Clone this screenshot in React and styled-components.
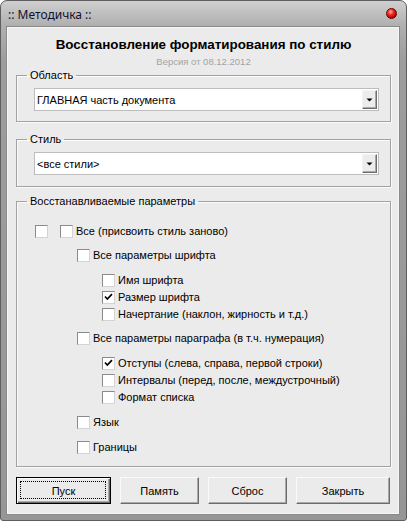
import React, { useState } from "react";
import styled, { createGlobalStyle } from "styled-components";

const GlobalStyle = createGlobalStyle`
  body {
    margin: 0;
    background: #ffffff;
    font-family: "Liberation Sans", Arial, sans-serif;
  }
`;

const Window = styled.div`
  width: 407px;
  height: 521px;
  box-sizing: border-box;
  display: flex;
  flex-direction: column;
  padding: 0 7px 6px 6px;
  border: 1px solid #5e5e5e;
  border-radius: 7px 7px 3px 3px;
  background: linear-gradient(180deg, #cfcfcf 0px, #b0b0b0 24px, #9d9d9d 60px, #969696 100%);
`;

const TitleBar = styled.div`
  height: 26px;
  display: flex;
  align-items: center;
  justify-content: space-between;
  padding: 0 2px 0 1px;
`;

const Caption = styled.span`
  font-family: "Noto Sans", "Open Sans", sans-serif;
  font-size: 12px;
  color: #101030;
  padding-top: 1px;
`;

const CloseDot = styled.div`
  width: 11px;
  height: 11px;
  box-sizing: border-box;
  border-radius: 50%;
  border: 1px solid #6a0000;
  background: radial-gradient(circle at 40% 32%, #ffb0a8 0, #f03020 35%, #c00000 70%, #7a0000 100%);
  margin-bottom: 1px;
`;

const Client = styled.div`
  flex: 1;
  display: flex;
  flex-direction: column;
  background: #ebebeb;
  border: 1px solid #f7f7f7;
  box-shadow: 0 0 0 1px #8a8a8a;
  padding: 0 7px 9px 8px;
  font-size: 11px;
  color: #000;
`;

const Heading = styled.div`
  padding-top: 9px;
  text-align: center;
  font-weight: bold;
  font-size: 13.4px;
  line-height: 16px;
`;

const Version = styled.div`
  margin-top: 3px;
  text-align: center;
  font-size: 9.5px;
  line-height: 12px;
  color: #a3a3a3;
`;

const Group = styled.fieldset`
  margin: ${(p) => p.$top || 0}px 0 0 0;
  padding: 0;
  border: 1px solid #a2a2a2;
  box-shadow: inset 1px 1px 0 #fbfbfb, 1px 1px 0 #fbfbfb;
  min-width: 0;
  ${(p) => (p.$grow ? "flex: 1;" : "")}
`;

const Legend = styled.legend`
  margin-left: 10px;
  padding: 0 3px;
  line-height: 14px;
  font-size: 11px;
`;

const GroupBody = styled.div`
  padding: ${(p) => p.$pad};
`;

const Combo = styled.div`
  height: 23px;
  box-sizing: border-box;
  display: flex;
  align-items: center;
  background: #fff;
  border: 1px solid #bdbdbd;
  padding: 1px 1px 1px 2px;
`;

const ComboText = styled.span`
  flex: 1;
  line-height: 14px;
  font-size: 11px;
`;

const DropButton = styled.div`
  width: 15px;
  height: 19px;
  box-sizing: border-box;
  display: flex;
  align-items: center;
  justify-content: center;
  background: #ececec;
  border-top: 1px solid #f4f4f4;
  border-left: 1px solid #f4f4f4;
  border-right: 1px solid #6e6e6e;
  border-bottom: 1px solid #6e6e6e;
  box-shadow: inset -1px -1px 0 #a8a8a8;
`;

const Row = styled.div`
  display: flex;
  align-items: center;
  height: 13px;
  margin-top: ${(p) => p.$gap || 0}px;
  margin-left: ${(p) => p.$indent || 0}px;
`;

const Box = styled.span`
  width: 13px;
  height: 13px;
  box-sizing: border-box;
  flex: none;
  display: flex;
  align-items: center;
  justify-content: center;
  background: #fff;
  border: 1px solid;
  border-color: #8a8a8a #d4d4d4 #d4d4d4 #8a8a8a;
  margin-right: ${(p) => p.$space || 3}px;
  cursor: default;
`;

const Label = styled.span`
  line-height: 13px;
  white-space: nowrap;
`;

const ButtonRow = styled.div`
  display: flex;
  gap: 9px;
  margin-top: 10px;
`;

const Button = styled.button`
  width: ${(p) => p.$w}px;
  height: 27px;
  box-sizing: border-box;
  padding: 0;
  font-family: "Liberation Sans", Arial, sans-serif;
  font-size: 11px;
  color: #000;
  background: #ebebeb;
  border: 1px solid;
  border-color: ${(p) => (p.$default ? "#000" : "#fafafa #6c6c6c #6c6c6c #fafafa")};
  box-shadow: ${(p) =>
    p.$default
      ? "inset 1px 1px 0 #fafafa, inset -1px -1px 0 #6c6c6c, inset -2px -2px 0 #a8a8a8"
      : "inset -1px -1px 0 #a8a8a8"};
  position: relative;
`;

const FocusRing = styled.span`
  position: absolute;
  inset: 3px 4px 4px 3px;
  border: 1px dotted #000;
`;

const Check = () => (
  <svg width="9" height="9" viewBox="0 0 9 9">
    <path d="M1 3.5 L3.3 6 L8 1.2" fill="none" stroke="#000" strokeWidth="1.7" />
  </svg>
);

const Arrow = () => (
  <svg width="7" height="4" viewBox="0 0 7 4">
    <polygon points="0.5,0.5 6.5,0.5 3.5,3.5" fill="#000" />
  </svg>
);

const CheckBox = ({ checked, onToggle, space }) => (
  <Box $space={space} onClick={onToggle}>
    {checked && <Check />}
  </Box>
);

const options = [
  { id: "font", text: "Все параметры шрифта", indent: 42, gap: 11 },
  { id: "fontName", text: "Имя шрифта", indent: 67, gap: 12 },
  { id: "fontSize", text: "Размер шрифта", indent: 67, gap: 4 },
  { id: "fontStyle", text: "Начертание (наклон, жирность и т.д.)", indent: 67, gap: 4 },
  { id: "para", text: "Все параметры параграфа (в т.ч. нумерация)", indent: 42, gap: 11 },
  { id: "indent", text: "Отступы (слева, справа, первой строки)", indent: 67, gap: 12 },
  { id: "spacing", text: "Интервалы (перед, после, междустрочный)", indent: 67, gap: 4 },
  { id: "list", text: "Формат списка", indent: 67, gap: 4 },
  { id: "lang", text: "Язык", indent: 42, gap: 12 },
  { id: "borders", text: "Границы", indent: 42, gap: 12 },
];

const App = () => {
  const [checks, setChecks] = useState({ fontSize: true, indent: true });
  const toggle = (id) => setChecks({ ...checks, [id]: !checks[id] });

  return (
    <>
      <GlobalStyle />
      <Window>
        <TitleBar>
          <Caption>:: Методичка ::</Caption>
          <CloseDot />
        </TitleBar>
        <Client>
          <Heading>Восстановление форматирования по стилю</Heading>
          <Version>Версия от 08.12.2012</Version>

          <Group>
            <Legend>Область</Legend>
            <GroupBody $pad="6px 11px 10px 17px">
              <Combo>
                <ComboText>ГЛАВНАЯ часть документа</ComboText>
                <DropButton>
                  <Arrow />
                </DropButton>
              </Combo>
            </GroupBody>
          </Group>

          <Group $top={10}>
            <Legend>Стиль</Legend>
            <GroupBody $pad="6px 11px 11px 17px">
              <Combo>
                <ComboText>&lt;все стили&gt;</ComboText>
                <DropButton>
                  <Arrow />
                </DropButton>
              </Combo>
            </GroupBody>
          </Group>

          <Group $top={7} $grow>
            <Legend>Восстанавливаемые параметры</Legend>
            <GroupBody $pad="17px 10px 0 18px">
              <Row>
                <CheckBox space={12} checked={checks.master} onToggle={() => toggle("master")} />
                <CheckBox checked={checks.all} onToggle={() => toggle("all")} />
                <Label>Все (присвоить стиль заново)</Label>
              </Row>
              {options.map((o) => (
                <Row key={o.id} $indent={o.indent} $gap={o.gap}>
                  <CheckBox checked={checks[o.id]} onToggle={() => toggle(o.id)} />
                  <Label>{o.text}</Label>
                </Row>
              ))}
            </GroupBody>
          </Group>

          <ButtonRow>
            <Button $w={95} $default>
              <FocusRing />
              Пуск
            </Button>
            <Button $w={79}>Память</Button>
            <Button $w={79}>Сброс</Button>
            <Button $w={94}>Закрыть</Button>
          </ButtonRow>
        </Client>
      </Window>
    </>
  );
};

export default App;
